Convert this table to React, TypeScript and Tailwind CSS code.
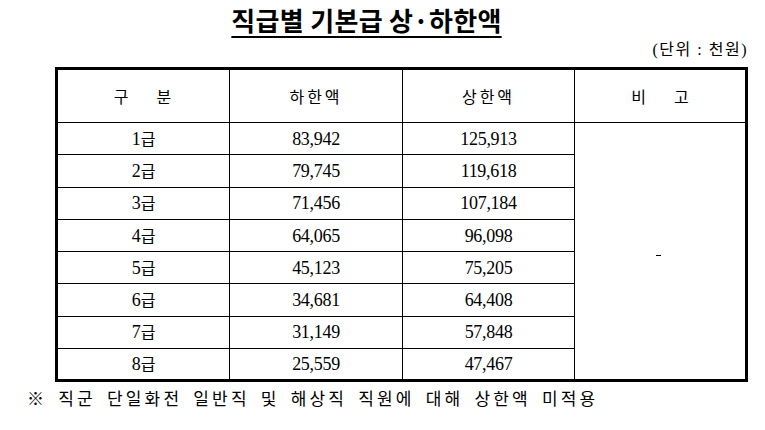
const rows = [
  { grade: "1급", low: "83,942", high: "125,913" },
  { grade: "2급", low: "79,745", high: "119,618" },
  { grade: "3급", low: "71,456", high: "107,184" },
  { grade: "4급", low: "64,065", high: "96,098" },
  { grade: "5급", low: "45,123", high: "75,205" },
  { grade: "6급", low: "34,681", high: "64,408" },
  { grade: "7급", low: "31,149", high: "57,848" },
  { grade: "8급", low: "25,559", high: "47,467" },
];

const serif = "font-['Liberation_Serif','Noto_Sans_CJK_KR',serif]";

export default function App() {
  return (
    <div className="w-[765px] h-[430px] bg-white text-black overflow-hidden font-['Noto_Sans_CJK_KR',sans-serif]">
      {/* 제목 */}
      <div className="pt-[4px] pr-[32px] text-center">
        <h1 className="inline-block text-[26px] leading-[32px] font-bold tracking-[0.3px] underline underline-offset-[5px] decoration-[2px]">
          직급별 기본급 상·하한액
        </h1>
      </div>

      {/* 단위 */}
      <div className="flex justify-end pr-[17px] mt-[4px]">
        <span className={`${serif} text-[16px] leading-[20px] tracking-[1.5px]`}>(단위 : 천원)</span>
      </div>

      {/* 표 */}
      <table className="ml-[55px] mt-[7px] w-[690px] table-fixed border-collapse border-[3px] border-black">
        <thead>
          <tr className="h-[54px]">
            <th className="w-[173px] border border-black font-normal text-[16px] tracking-[2px]">
              <span className="inline-flex gap-[26px]"><span>구</span><span>분</span></span>
            </th>
            <th className="w-[173px] border border-black font-normal text-[16px] tracking-[3px]">하한액</th>
            <th className="w-[172px] border border-black font-normal text-[16px] tracking-[3px]">상한액</th>
            <th className="w-[172px] border border-black font-normal text-[16px]">
              <span className="inline-flex gap-[28px]"><span>비</span><span>고</span></span>
            </th>
          </tr>
        </thead>
        <tbody>
          {rows.map((r, i) => (
            <tr key={r.grade} className="h-[32.3px]">
              <td className={`${serif} border border-black text-center text-[18px] leading-none`}>
                {r.grade.slice(0, 1)}
                <span className="text-[16px] font-['Noto_Sans_CJK_KR',sans-serif]">급</span>
              </td>
              <td className={`${serif} border border-black text-center text-[18px] tracking-[-0.3px] leading-none`}>{r.low}</td>
              <td className={`${serif} border border-black text-center text-[18px] tracking-[-0.3px] leading-none`}>{r.high}</td>
              {i === 0 && (
                <td rowSpan={8} className="border border-black align-middle">
                  <div className="flex justify-center pt-[8px] pr-[4px]">
                    <span className="block w-[5px] h-[1px] bg-black" />
                  </div>
                </td>
              )}
            </tr>
          ))}
        </tbody>
      </table>

      {/* 주석 */}
      <p className="mt-[5px] pl-[27px] text-[17px] leading-[22px] tracking-[3.2px] [word-spacing:4px]">
        ※ 직군 단일화전 일반직 및 해상직 직원에 대해 상한액 미적용
      </p>
    </div>
  );
}
